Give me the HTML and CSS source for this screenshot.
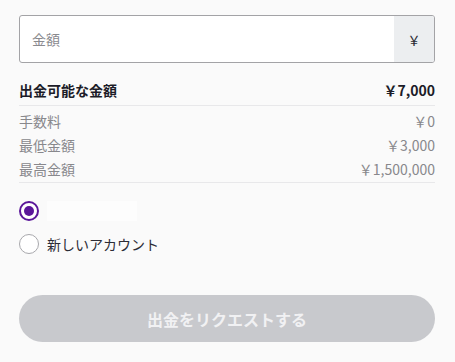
FILE: index.html
```html
<!DOCTYPE html>
<html lang="ja">

<head>
    <meta charset="UTF-8">
    <meta name="viewport" content="width=device-width, initial-scale=1.0">
    <title>出金</title>
    <link rel="stylesheet" href="styles.css">
</head>

<body>
    <div class="withdraw">
        <div class="amount-field">
            <input type="text" class="amount-input" placeholder="金額">
            <span class="addon">￥</span>
        </div>

        <div class="summary">
            <div class="summary-head">
                <span>出金可能な金額</span>
                <span>￥7,000</span>
            </div>
            <div class="summary-list">
                <div class="summary-row"><span>手数料</span><span>￥0</span></div>
                <div class="summary-row"><span>最低金額</span><span>￥3,000</span></div>
                <div class="summary-row"><span>最高金額</span><span>￥1,500,000</span></div>
            </div>
        </div>

        <div class="accounts">
            <label class="option">
                <span class="radio checked"></span>
                <span class="blank"></span>
            </label>
            <label class="option">
                <span class="radio"></span>
                <span>新しいアカウント</span>
            </label>
        </div>

        <button class="submit" disabled>出金をリクエストする</button>
    </div>
</body>
</html>
```

FILE: styles.css
```css
* {
    margin: 0;
    padding: 0;
    box-sizing: border-box;
    font-family: "Noto Sans CJK JP", "Noto Sans", sans-serif;
}

body {
    background-color: #fafafa;
    color: #1c1c28;
}

.withdraw {
    width: 416px;
    margin-left: 19px;
    padding-top: 15px;
}

.amount-field {
    display: flex;
    height: 48px;
    border: 1px solid #a3a3a6;
    border-radius: 3px;
    background-color: #fff;
    overflow: hidden;
}

.amount-input {
    flex: 1;
    border: none;
    outline: none;
    padding: 0 12px;
    font-size: 14px;
    color: #333;
    background: transparent;
}

.amount-input::placeholder {
    color: #8a8a8e;
}

.addon {
    width: 40px;
    display: flex;
    align-items: center;
    justify-content: center;
    background-color: #eceef0;
    font-size: 13px;
    color: #2a2a33;
}

.summary {
    margin-top: 15px;
}

.summary-head,
.summary-row {
    display: flex;
    justify-content: space-between;
    font-size: 14px;
    line-height: 24px;
}

.summary-head {
    font-weight: 700;
    padding-bottom: 3px;
    border-bottom: 1px solid #e8e8ea;
}

.summary-list {
    padding: 3px 0 1px;
    border-bottom: 1px solid #e8e8ea;
}

.summary-row {
    color: #88888c;
}

.accounts {
    padding-top: 18px;
    display: flex;
    flex-direction: column;
    gap: 13px;
}

.option {
    display: flex;
    align-items: center;
    gap: 8px;
    height: 20px;
    font-size: 14px;
    color: #2c2c36;
}

.radio {
    width: 20px;
    height: 20px;
    border-radius: 50%;
    border: 1px solid #a8a8ac;
    background-color: #fff;
    position: relative;
}

.radio.checked {
    border: 2px solid #5a1699;
}

.radio.checked:after {
    content: '';
    position: absolute;
    top: 3px;
    left: 3px;
    width: 10px;
    height: 10px;
    border-radius: 50%;
    background-color: #5a1699;
}

.blank {
    width: 90px;
    height: 20px;
    background-color: #fdfdfd;
}

.submit {
    display: block;
    width: 100%;
    height: 47px;
    margin-top: 41px;
    border: none;
    border-radius: 24px;
    background-color: #c8c9cd;
    color: #f1f1f3;
    font-size: 16px;
    font-weight: 700;
}
```
